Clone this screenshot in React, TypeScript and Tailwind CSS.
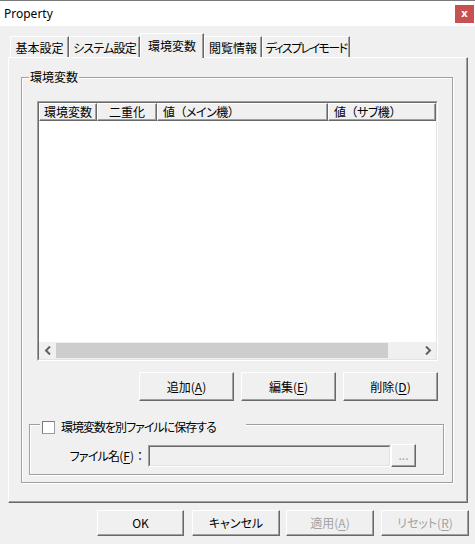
import React from "react";

const raised =
  "border border-t-white border-l-white border-r-[#696969] border-b-[#696969] shadow-[inset_-1px_-1px_0_#a0a0a0]";
const etched =
  "border border-[#a0a0a0] shadow-[1px_1px_0_#fff,inset_1px_1px_0_#fff]";
const full = "[font-feature-settings:normal]";

function Btn({
  w,
  h,
  children,
  disabled,
  className = "",
}: {
  w: string;
  h: string;
  children: React.ReactNode;
  disabled?: boolean;
  className?: string;
}) {
  return (
    <div
      className={`${w} ${h} ${raised} bg-[#f0f0f0] flex items-center justify-center whitespace-nowrap text-[12px] leading-[16px] ${
        disabled ? "text-[#a3a3a3]" : "text-black"
      } ${className}`}
    >
      {children}
    </div>
  );
}

function Tab({
  label,
  w,
  active,
  track = "",
}: {
  label: string;
  w: string;
  active?: boolean;
  track?: string;
}) {
  if (active) {
    return (
      <div
        className={`${w} h-[25px] -mb-[1px] relative z-10 bg-[#f0f0f0] border-t border-l border-r border-t-white border-l-white border-r-[#696969] shadow-[inset_-1px_0_0_#a0a0a0] flex justify-center pt-[4px] whitespace-nowrap text-[12px] leading-[16px] ${track}`}
      >
        {label}
      </div>
    );
  }
  return (
    <div
      className={`${w} h-[21px] bg-[#f0f0f0] border-t border-l border-r border-t-white border-l-white border-r-[#696969] shadow-[inset_-1px_0_0_#a0a0a0] flex justify-center pt-[3px] whitespace-nowrap overflow-hidden text-[12px] leading-[16px] ${track}`}
    >
      {label}
    </div>
  );
}

function HeaderCell({
  w,
  children,
  center,
}: {
  w: string;
  children: React.ReactNode;
  center?: boolean;
}) {
  return (
    <div
      className={`${w} h-full shrink-0 ${raised} bg-[#f0f0f0] flex items-center whitespace-nowrap ${
        center ? "justify-center" : "pl-[5px]"
      } text-[12px] leading-[16px]`}
    >
      {children}
    </div>
  );
}

export default function App() {
  return (
    <div className="w-[475px] h-[544px] bg-[#f0f0f0] overflow-hidden text-black font-['Noto_Sans_CJK_JP','Noto_Sans',sans-serif] [font-feature-settings:'palt']">
      {/* Title bar */}
      <div className="h-[26px] bg-white border-t border-[#7a7a7a] flex items-center justify-between">
        <div className="pl-[4px] text-[12px] leading-[16px] font-['Noto_Sans',sans-serif]">
          Property
        </div>
        <div className="w-[19px] h-[18px] mr-[1px] bg-[#c75050] flex items-center justify-center text-white text-[11px] font-bold leading-none font-['Noto_Sans',sans-serif] pb-[2px]">
          x
        </div>
      </div>

      {/* Tabs */}
      <div className="h-[31px] flex items-end pl-[10px]">
        <Tab label="基本設定" w="w-[59px]" />
        <Tab label="システム設定" w="w-[71px]" track="tracking-[-0.8px]" />
        <Tab label="環境変数" w="w-[64px]" active />
        <Tab label="閲覧情報" w="w-[58px]" />
        <Tab label="ディスプレイモード" w="w-[88px]" track="tracking-[-1.6px]" />
      </div>

      {/* Panel */}
      <div className="ml-[8px] w-[460px] h-[446px] border border-t-white border-l-white border-r-[#696969] border-b-[#696969] shadow-[inset_-1px_-1px_0_#a0a0a0] pt-[19px] pl-[12px]">
        {/* Outer group */}
        <div className={`w-[432px] h-[406px] relative ${etched}`}>
          <div className="absolute left-[7px] top-[-9px] px-[1px] bg-[#f0f0f0] text-[12px] leading-[16px]">
            環境変数
          </div>

          {/* List view */}
          <div className="ml-[15px] mt-[23px] w-[401px] h-[260px] border border-t-[#a0a0a0] border-l-[#a0a0a0] border-r-white border-b-white">
            <div className="w-full h-full border border-t-[#696969] border-l-[#696969] border-r-[#e3e3e3] border-b-[#e3e3e3] bg-white flex flex-col">
              <div className="h-[18px] flex shrink-0">
                <HeaderCell w="w-[58px]" center>環境変数</HeaderCell>
                <HeaderCell w="w-[60px]" center>二重化</HeaderCell>
                <HeaderCell w="w-[171px]">
                  <span className="tracking-[-0.5px]">
                    値<span className={full}>（</span>メイン機<span className={full}>）</span>
                  </span>
                </HeaderCell>
                <HeaderCell w="flex-1">
                  <span className="tracking-[-0.5px]">
                    値<span className={full}>（</span>サブ機<span className={full}>）</span>
                  </span>
                </HeaderCell>
              </div>
              <div className="flex-1 bg-white" />
              <div className="h-[17px] shrink-0 bg-[#f0f0f0] flex items-center">
                <div className="w-[17px] h-full flex items-center justify-center">
                  <svg width="8" height="9" viewBox="0 0 8 9">
                    <path d="M6 0.5 L2 4.5 L6 8.5" fill="none" stroke="#606060" strokeWidth="2" />
                  </svg>
                </div>
                <div className="w-[332px] h-[15px] bg-[#cdcdcd]" />
                <div className="flex-1" />
                <div className="w-[17px] h-full flex items-center justify-center">
                  <svg width="8" height="9" viewBox="0 0 8 9">
                    <path d="M2 0.5 L6 4.5 L2 8.5" fill="none" stroke="#606060" strokeWidth="2" />
                  </svg>
                </div>
              </div>
            </div>
          </div>

          {/* Action buttons */}
          <div className="mt-[11px] ml-[117px] flex gap-[7px]">
            <Btn w="w-[95px]" h="h-[29px]">
              追加(<span className="underline underline-offset-2">A</span>)
            </Btn>
            <Btn w="w-[95px]" h="h-[29px]">
              編集(<span className="underline underline-offset-2">E</span>)
            </Btn>
            <Btn w="w-[95px]" h="h-[29px]">
              削除(<span className="underline underline-offset-2">D</span>)
            </Btn>
          </div>

          {/* Inner group */}
          <div className={`mt-[23px] ml-[7px] w-[415px] h-[51px] relative ${etched}`}>
            <div className="absolute left-[10px] top-[-6px] w-[206px] px-[2px] bg-[#f0f0f0] flex items-center gap-[6px]">
              <div className="w-[13px] h-[13px] shrink-0 bg-white border border-t-[#7a7a7a] border-l-[#7a7a7a] border-r-[#9a9a9a] border-b-[#9a9a9a]" />
              <div className="text-[12px] leading-[16px] tracking-[-1px] whitespace-nowrap">
                環境変数を別ファイルに保存する
              </div>
            </div>
            <div className="mt-[19px] flex items-center">
              <div className="w-[118px] text-right pr-[2px] text-[12px] leading-[16px] whitespace-nowrap">
                <span className="tracking-[-0.8px]">ファイル名</span>(<span className="underline underline-offset-2">F</span>)<span className={full}>：</span>
              </div>
              <div className="w-[243px] h-[22px] border border-t-[#a0a0a0] border-l-[#a0a0a0] border-r-white border-b-white">
                <div className="w-full h-full border border-t-[#696969] border-l-[#696969] border-r-[#e3e3e3] border-b-[#e3e3e3] bg-[#f0f0f0]" />
              </div>
              <Btn w="w-[25px]" h="h-[23px]" disabled className="text-[10px]">
                <span className="pb-[2px]">...</span>
              </Btn>
            </div>
          </div>
        </div>
      </div>

      {/* Bottom buttons */}
      <div className="mt-[7px] ml-[97px] flex">
        <Btn w="w-[87px]" h="h-[26px]">OK</Btn>
        <Btn w="w-[88px]" h="h-[26px]" className="ml-[8px]">キャンセル</Btn>
        <Btn w="w-[88px]" h="h-[26px]" disabled className="ml-[6px]">
          適用(<span className="underline underline-offset-2">A</span>)
        </Btn>
        <Btn w="w-[88px]" h="h-[26px]" disabled className="ml-[7px]">
          リセット(<span className="underline underline-offset-2">R</span>)
        </Btn>
      </div>
    </div>
  );
}
